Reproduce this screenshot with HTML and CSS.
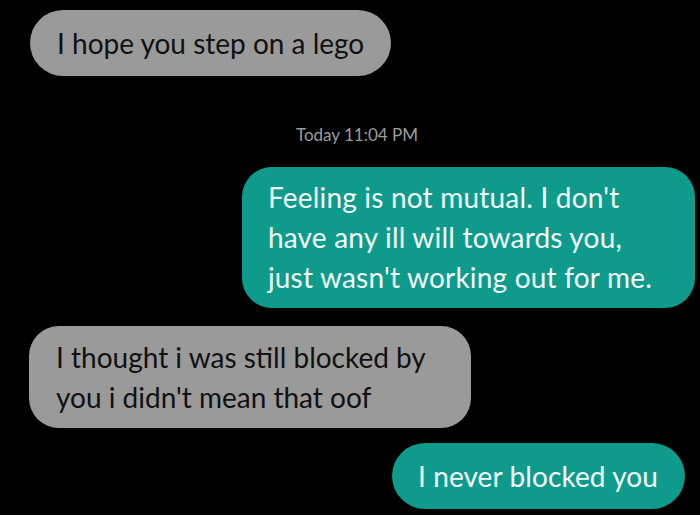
FILE: index.html
```html
<!DOCTYPE html>
<html>
<head>
<meta charset="utf-8">
<link rel="stylesheet" href="styles.css">
</head>
<body>
<div class="thread">
  <div class="bubble in b1">I hope you step on a lego</div>
  <div class="stamp">Today 11:04 PM</div>
  <div class="bubble out b2">Feeling is not mutual. I don't<br>have any ill will towards you,<br>just wasn't working out for me.</div>
  <div class="bubble in b3">I thought i was still blocked by<br>you i didn't mean that oof</div>
  <div class="bubble out b4">I never blocked you</div>
</div>
</body>
</html>
```
FILE: styles.css
```css
html, body {
  margin: 0;
  background: #000;
}
.thread {
  width: 700px;
  height: 515px;
  overflow: hidden;
  display: flex;
  flex-direction: column;
  font-family: Lato, "Open Sans", sans-serif;
}
.bubble {
  font-size: 28px;
  line-height: 40px;
  padding: 11px 26px;
  border-radius: 30px;
  white-space: nowrap;
}
.in {
  align-self: flex-start;
  background: #9a9a9a;
  color: #111;
  margin-left: 30px;
}
.out {
  align-self: flex-end;
  background: #0f9b8c;
  color: #f2fbf9;
}
.b1 {
  margin-top: 10px;
  padding: 13px 27px;
  border-radius: 33px;
}
.stamp {
  align-self: center;
  margin-top: 49px;
  margin-left: 14px;
  font-size: 17px;
  line-height: 20px;
  color: #9c9c9c;
}
.b2 {
  margin-top: 22px;
  margin-right: 5px;
  padding: 10px 43px 11px 26px;
  letter-spacing: 0.2px;
}
.b3 {
  margin-top: 18px;
  margin-left: 29px;
  padding: 11px 45px 11px 27px;
}
.b4 {
  margin-top: 15px;
  margin-right: 15px;
  padding: 13px 27px 13px 26px;
  border-radius: 33px;
  letter-spacing: 0.1px;
}
```
